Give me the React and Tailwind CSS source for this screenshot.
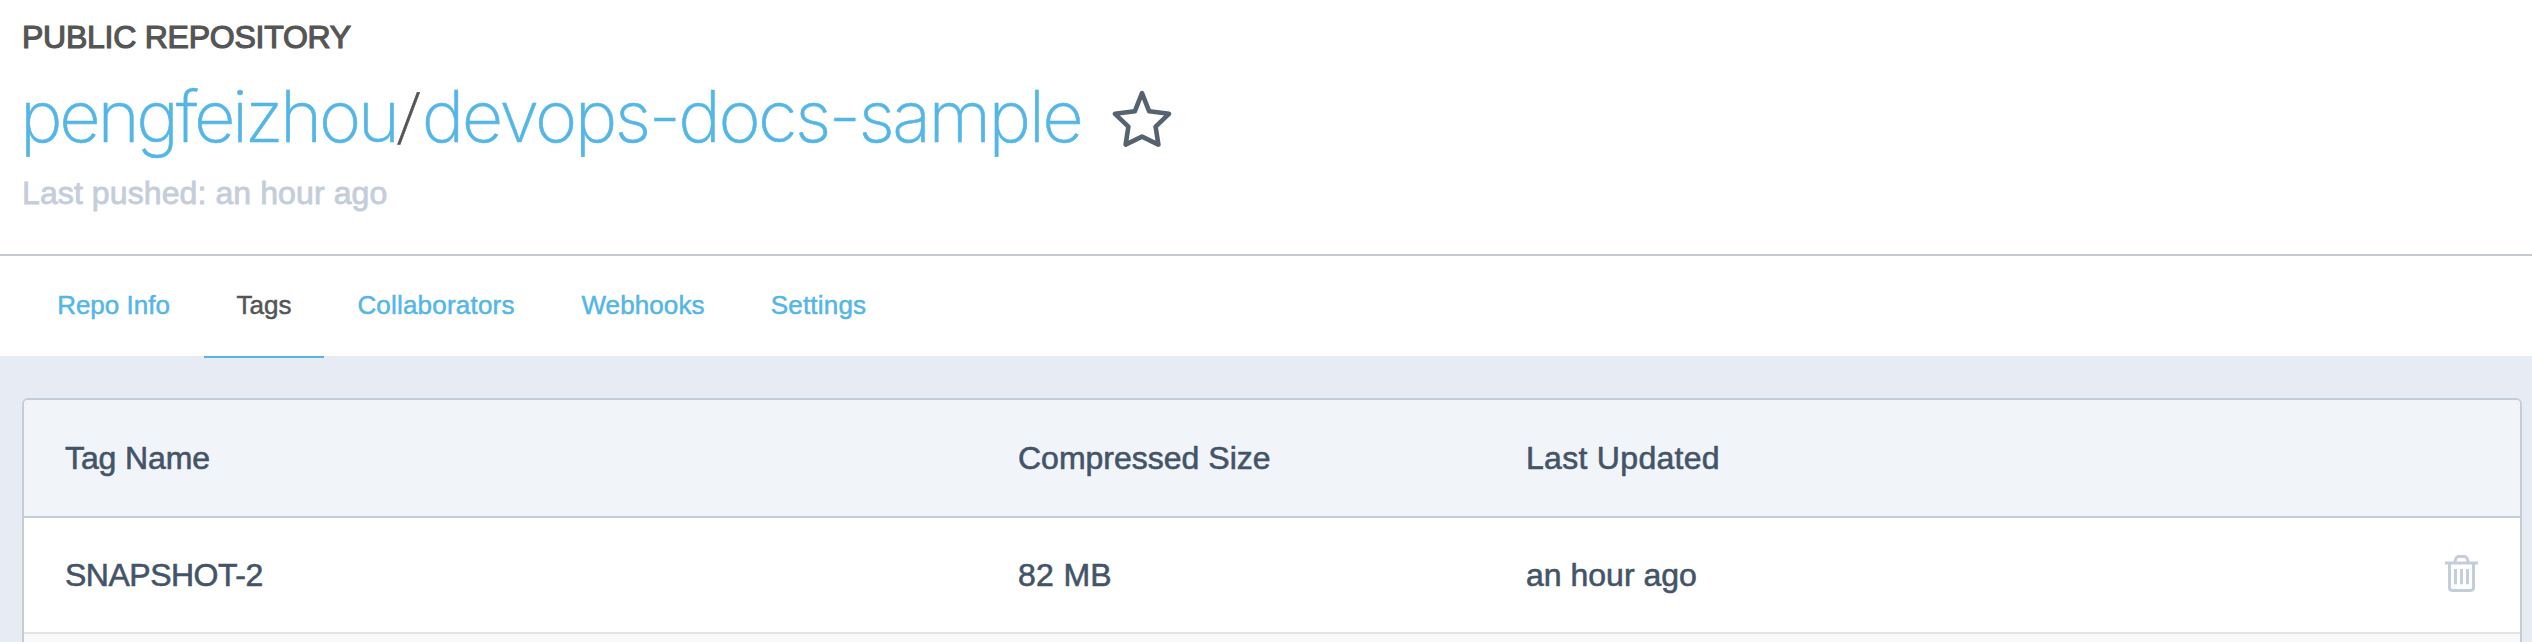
const tabs = [
  { label: "Repo Info", width: "w-[179px]", spacing: "tracking-normal" },
  { label: "Tags", width: "w-[120px]", spacing: "tracking-normal", active: true },
  { label: "Collaborators", width: "w-[224px]", spacing: "tracking-[0.2px]" },
  { label: "Webhooks", width: "w-[190px]", spacing: "tracking-[0.1px]" },
  { label: "Settings", width: "w-[161px]", spacing: "tracking-[0.2px]" },
];

function StarIcon() {
  return (
    <svg className="mt-[8px] h-[58px] w-[60px]" viewBox="0 0 60 58" fill="none" stroke="#556270" strokeWidth="4.6" strokeLinejoin="round">
      <path d="M30 3.2L37.2 21.3L57 23.8L43.6 36.6L46.4 54.6L30 46.6L13.6 54.6L16.4 36.6L3 23.8L22.8 21.3Z" />
    </svg>
  );
}

function TrashIcon() {
  return (
    <svg className="mb-[3px] h-[37px] w-[33px]" viewBox="0 0 33 37" fill="none" stroke="#c4cdda" strokeWidth="3">
      <path d="M0 8H33" />
      <path d="M9.5 7.5L11 3.4Q11.8 1.6 13.4 1.6H19.6Q21.2 1.6 22 3.4L23.5 7.5" />
      <path d="M4.5 8V32.5Q4.5 35.4 7.4 35.4H25.6Q28.5 35.4 28.5 32.5V8" />
      <path d="M10.5 14V29.3M16.5 14V29.3M22.5 14V29.3" />
    </svg>
  );
}

export default function App() {
  return (
    <div className="flex h-[642px] w-full flex-col overflow-hidden bg-[#e7ebf4] font-['Liberation_Sans',Arial,sans-serif]">
      <header className="flex h-[256px] shrink-0 flex-col border-b-2 border-[#c4c9d4] bg-white pl-[22px]">
        <div className="mt-[18px] h-[38px] text-[32px] leading-[38px] tracking-[-0.25px] whitespace-nowrap text-[#555555] [-webkit-text-stroke:1.2px_#555555]">
          PUBLIC REPOSITORY
        </div>
        <div className="flex h-[117px] items-center">
          <h1 className="mt-[6px] -ml-[2px] flex w-[1092px] items-baseline font-[Inter,sans-serif] text-[72px] leading-[100px] font-extralight whitespace-nowrap text-[#54b6e7] [-webkit-text-stroke:0.6px]">
            <a className="tracking-[-3.3px]">pengfeizhou</a>
            <span className="relative -top-[4px] mr-[1px] w-[24px] -skew-x-6 text-center text-[60px] text-[#555555]">/</span>
            <a className="tracking-[-2.5px]">devops-docs-sample</a>
          </h1>
          <StarIcon />
        </div>
        <div className="mt-[1px] h-[38px] text-[32px] leading-[38px] tracking-[0.1px] whitespace-nowrap text-[#c4cdda] [-webkit-text-stroke:0.8px_#c4cdda]">
          Last pushed: an hour ago
        </div>
      </header>

      <nav className="flex h-[102px] shrink-0 bg-[linear-gradient(#fff_100px,#e7ebf4_100px)] pl-[24px] text-[26px]">
        {tabs.map((tab) => (
          <a
            key={tab.label}
            className={`flex justify-center border-b-2 pt-[33px] leading-[32px] whitespace-nowrap first:mr-[1px] ${tab.width} ${tab.spacing} ${
              tab.active
                ? "border-[#54b6e7] text-[#555555] [-webkit-text-stroke:0.5px_#555555]"
                : "border-transparent text-[#54b6e7] [-webkit-text-stroke:0.5px_#54b6e7]"
            }`}
          >
            {tab.label}
          </a>
        ))}
      </nav>

      <main className="mt-[40px] mr-[10px] ml-[22px] grow rounded-t-[6px] border-2 border-b-0 border-[#c4cdda] bg-[#f9f9f9] text-[32px] text-[#445468] [-webkit-text-stroke:0.6px_#445468]">
        <div className="grid h-[118px] grid-cols-[953px_508px_1fr] items-center rounded-t-[4px] border-b-2 border-[#c4cdda] bg-[#f1f5fa] pl-[41px] leading-[38px]">
          <div className="tracking-[-0.1px]">Tag Name</div>
          <div>Compressed Size</div>
          <div className="tracking-[0.3px]">Last Updated</div>
        </div>
        <div className="grid h-[116px] grid-cols-[953px_508px_1fr_75px] items-center border-b-2 border-[#e3e3e3] bg-white pl-[41px] leading-[38px]">
          <div className="tracking-[-0.5px]">SNAPSHOT-2</div>
          <div className="tracking-[0.3px]">82 MB</div>
          <div>an hour ago</div>
          <TrashIcon />
        </div>
      </main>
    </div>
  );
}
